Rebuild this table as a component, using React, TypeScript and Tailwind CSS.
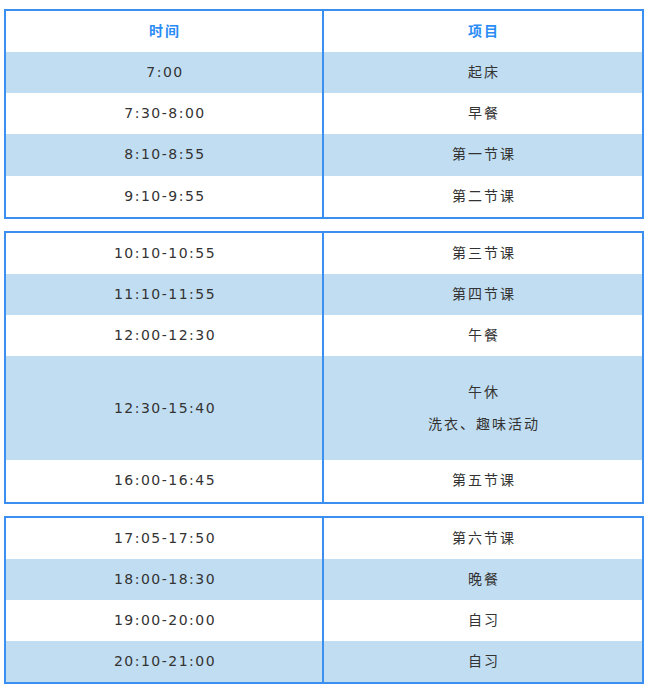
import React from "react";

type Row = { time: string; items: string[]; blue?: boolean; tall?: boolean };

const groups: Row[][] = [
  [
    { time: "7:00", items: ["起床"], blue: true },
    { time: "7:30-8:00", items: ["早餐"] },
    { time: "8:10-8:55", items: ["第一节课"], blue: true },
    { time: "9:10-9:55", items: ["第二节课"] },
  ],
  [
    { time: "10:10-10:55", items: ["第三节课"] },
    { time: "11:10-11:55", items: ["第四节课"], blue: true },
    { time: "12:00-12:30", items: ["午餐"] },
    { time: "12:30-15:40", items: ["午休", "洗衣、趣味活动"], blue: true, tall: true },
    { time: "16:00-16:45", items: ["第五节课"] },
  ],
  [
    { time: "17:05-17:50", items: ["第六节课"] },
    { time: "18:00-18:30", items: ["晚餐"], blue: true },
    { time: "19:00-20:00", items: ["自习"] },
    { time: "20:10-21:00", items: ["自习"], blue: true },
  ],
];

const font = { fontFamily: '"DejaVu Sans", "Noto Sans CJK SC", sans-serif' };

const TableRow = ({ row }: { row: Row }) => (
  <div
    className={`grid grid-cols-2 ${row.tall ? "h-[104px]" : "h-[41.2px]"} ${
      row.blue ? "bg-[#c1ddf1]" : "bg-white"
    }`}
  >
    <div className="flex items-center justify-center border-r-2 border-[#3a8ff0] pl-[2px] text-[14px] tracking-[1.5px] text-[#333]">
      {row.time}
    </div>
    <div className="flex flex-col items-center justify-center pl-[2px] text-[14px] tracking-[2px] text-[#333]">
      {row.items.map((t) => (
        <div key={t} className={row.items.length > 1 ? "leading-[32px]" : ""}>
          {t}
        </div>
      ))}
    </div>
  </div>
);

export default function App() {
  return (
    <div className="w-[650px] h-[696px] bg-white px-[4px] pt-[9px]" style={font}>
      {groups.map((g, i) => (
        <div
          key={i}
          className={`w-[640px] border-2 border-[#3a8ff0] ${i > 0 ? "mt-[12px]" : ""}`}
        >
          {i === 0 && (
            <div className="grid grid-cols-2 h-[41px] bg-white">
              <div className="flex items-center justify-center border-r-2 border-[#3a8ff0] pl-[2px] text-[14px] font-bold tracking-[2px] text-[#2b8cf5]">
                时间
              </div>
              <div className="flex items-center justify-center pl-[2px] text-[14px] font-bold tracking-[2px] text-[#2b8cf5]">
                项目
              </div>
            </div>
          )}
          {g.map((r) => (
            <TableRow key={r.time} row={r} />
          ))}
        </div>
      ))}
    </div>
  );
}
